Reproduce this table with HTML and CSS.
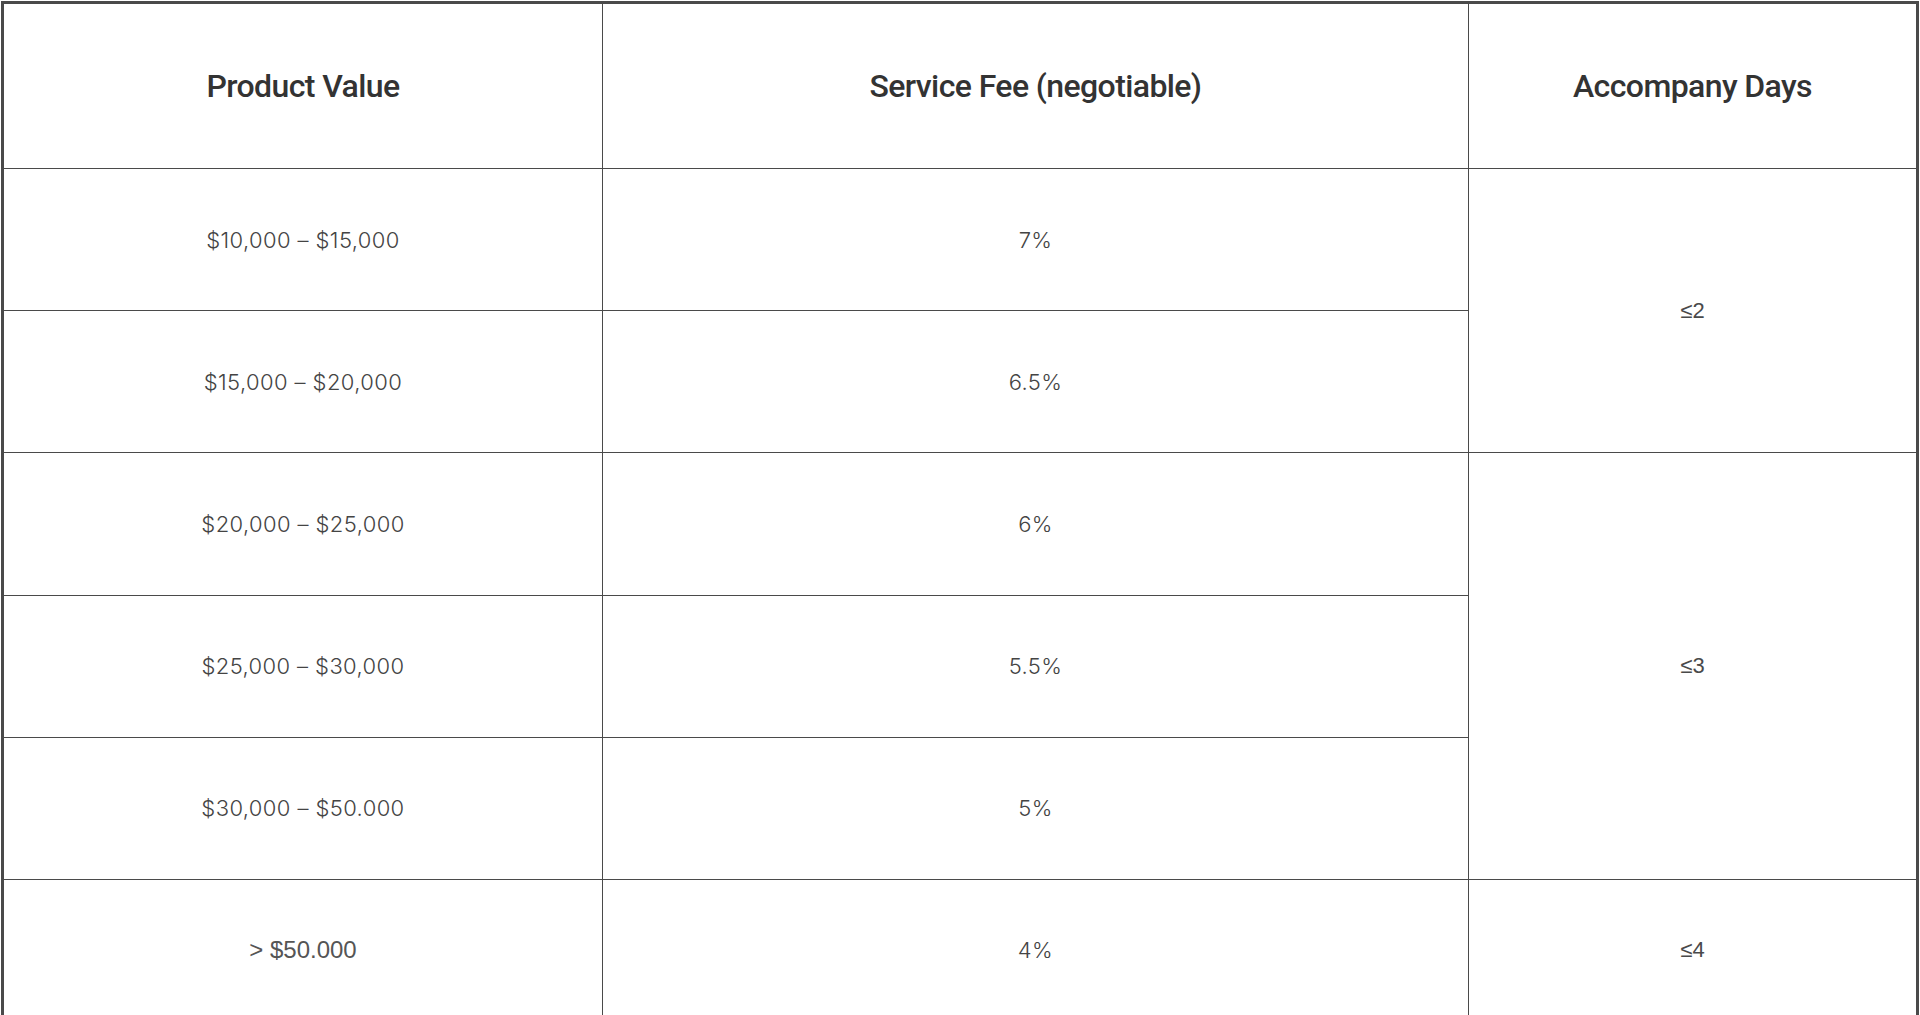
FILE: index.html
```html
<!DOCTYPE html>
<html lang="en">
<head>
<meta charset="utf-8">
<title>Service Fee Table</title>
<link rel="stylesheet" href="styles.css">
</head>
<body>
<div class="wrap">
  <table class="fees">
    <colgroup>
      <col class="c1">
      <col class="c2">
      <col class="c3">
    </colgroup>
    <thead>
      <tr class="head">
        <th>Product Value</th>
        <th>Service Fee (negotiable)</th>
        <th>Accompany Days</th>
      </tr>
    </thead>
    <tbody>
      <tr>
        <td>$10,000 – $15,000</td>
        <td>7%</td>
        <td rowspan="2" class="alt">≤2</td>
      </tr>
      <tr>
        <td>$15,000 – $20,000</td>
        <td>6.5%</td>
      </tr>
      <tr>
        <td>$20,000 – $25,000</td>
        <td>6%</td>
        <td rowspan="3" class="alt">≤3</td>
      </tr>
      <tr>
        <td>$25,000 – $30,000</td>
        <td>5.5%</td>
      </tr>
      <tr>
        <td>$30,000 – $50.000</td>
        <td>5%</td>
      </tr>
      <tr>
        <td class="alt big">&gt; $50.000</td>
        <td>4%</td>
        <td class="alt">≤4</td>
      </tr>
    </tbody>
  </table>
</div>
</body>
</html>
```

FILE: styles.css
```css
html, body {
  margin: 0;
  padding: 0;
  background: #ffffff;
}

.wrap {
  padding: 1px 0 0 1px;
  width: 1915px;
}

.fees {
  width: 1915px;
  border-collapse: collapse;
  table-layout: fixed;
  border: 3px solid #4a4a4a;
}

.c1 { width: 600px; }
.c2 { width: 866px; }
.c3 { width: 449px; }

.fees th,
.fees td {
  border: 1px solid #4a4a4a;
  text-align: center;
  vertical-align: middle;
  padding: 0;
}

.fees th {
  font-family: Roboto, "Liberation Sans", sans-serif;
  font-weight: 500;
  font-size: 32px;
  color: #333333;
  letter-spacing: -0.6px;
}

.head {
  height: 166px;
}

.fees tbody tr {
  height: 142.2px;
}

.fees td {
  font-family: Inter, "Liberation Sans", sans-serif;
  font-weight: 300;
  font-size: 22px;
  letter-spacing: 0.4px;
  color: #444444;
}

.fees td.alt {
  font-family: "Liberation Sans", Arial, sans-serif;
  font-weight: 400;
  font-size: 22px;
  letter-spacing: 0;
  color: #4a4a4a;
}

.fees td.big {
  font-size: 24px;
  color: #555555;
}
```
